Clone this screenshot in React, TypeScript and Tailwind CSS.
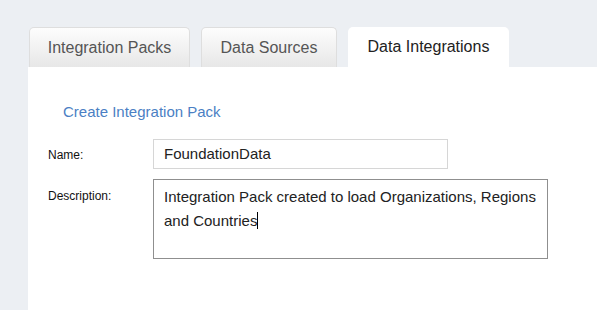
import React from "react";

const font = { fontFamily: '"Liberation Sans", Arial, sans-serif' };

function Tab({ label, active, w }: { label: string; active?: boolean; w: string }) {
  return (
    <div
      className={
        "h-[40px] flex items-center justify-center rounded-t-[5px] text-[16px] " +
        w +
        (active
          ? " bg-white text-[#222]"
          : " border border-b-0 border-[#dedede] bg-gradient-to-b from-[#fdfdfd] to-[#e7e7e7] text-[#555]")
      }
    >
      {label}
    </div>
  );
}

export default function App() {
  return (
    <div className="w-[597px] h-[310px] bg-[#eceff3] flex flex-col overflow-hidden" style={font}>
      <div className="flex gap-[11px] mt-[27px] ml-[29px]">
        <Tab label="Integration Packs" w="w-[161px]" />
        <Tab label="Data Sources" w="w-[136px]" />
        <Tab label="Data Integrations" active w="w-[161px]" />
      </div>
      <div className="ml-[28px] flex-1 bg-white pt-[36px]">
        <div className="pl-[35px] text-[15px] text-[#4b7fc4] leading-[17px]">Create Integration Pack</div>
        <div className="mt-[19px] pl-[20px] flex items-center">
          <div className="w-[105px] text-[12px] text-[#111] pt-[2px]">Name:</div>
          <div className="w-[295px] h-[30px] border border-[#d6d6d6] flex items-center pl-[10px] text-[15px] text-[#222]">
            FoundationData
          </div>
        </div>
        <div className="mt-[10px] pl-[20px] flex items-start">
          <div className="w-[105px] text-[12px] text-[#111] pt-[8px]">Description:</div>
          <div className="w-[395px] h-[80px] border border-[#8f8f8f] pl-[10px] pr-[8px] pt-[5px] text-[15px] leading-[24px] text-[#222]">
            Integration Pack created to load Organizations, Regions and Countries
            <span className="inline-block w-px h-[17px] bg-black align-[-3px]" />
          </div>
        </div>
      </div>
    </div>
  );
}
